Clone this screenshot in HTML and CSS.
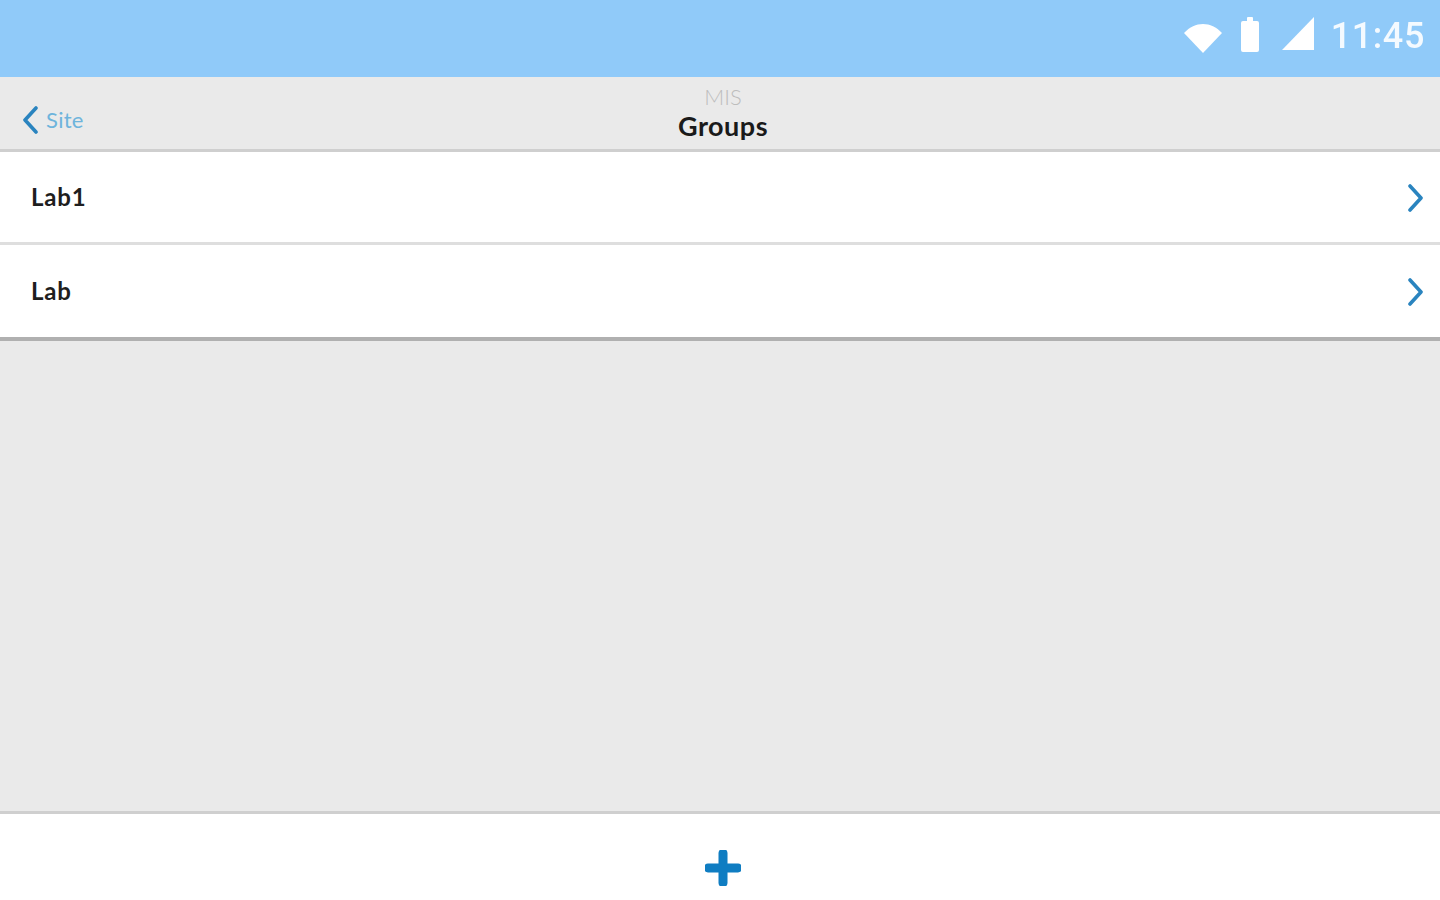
FILE: index.html
```html
<!DOCTYPE html>
<html lang="en">
<head>
<meta charset="utf-8">
<title>Groups</title>
<link rel="stylesheet" href="styles.css">
</head>
<body>
<div class="app">
  <header class="status">
    <svg class="ic-wifi" width="38" height="30" viewBox="0 0 38 30"><path class="white" d="M0 10 C11 -2 27 -2 38 10 L19 30 Z"/></svg>
    <svg class="ic-batt" width="18" height="35" viewBox="0 0 18 35"><path class="white" d="M6 4 V1 Q6 0 7 0 H11 Q12 0 12 1 V4 H16 Q18 4 18 6 V33 Q18 35 16 35 H2 Q0 35 0 33 V6 Q0 4 2 4 Z"/></svg>
    <svg class="ic-signal" width="32" height="33" viewBox="0 0 32 33"><path class="white" d="M32 0 V33 H0 Z"/></svg>
    <span class="clock">11:45</span>
  </header>
  <nav class="navbar">
    <div class="back">
      <svg width="18" height="28" viewBox="0 0 18 28"><path class="stroke" d="M15 2 L4 14 L15 26"/></svg>
      <span class="back-label">Site</span>
    </div>
    <div class="titles">
      <div class="subtitle">MIS</div>
      <div class="title">Groups</div>
    </div>
  </nav>
  <ul class="list">
    <li class="row">
      <span class="row-label">Lab1</span>
      <svg class="chev" width="18" height="28" viewBox="0 0 18 28"><path class="stroke" d="M3 2 L14 14 L3 26"/></svg>
    </li>
    <li class="row row-last">
      <span class="row-label">Lab</span>
      <svg class="chev" width="18" height="28" viewBox="0 0 18 28"><path class="stroke" d="M3 2 L14 14 L3 26"/></svg>
    </li>
  </ul>
  <main class="empty"></main>
  <footer class="toolbar">
    <svg width="36" height="36" viewBox="0 0 36 36"><path class="plus" d="M18 3 V33 M3 18 H33"/></svg>
  </footer>
</div>
</body>
</html>
```

FILE: styles.css
```css
* { box-sizing: border-box; }
html, body { margin: 0; padding: 0; height: 100%; }
body { font-family: Lato, "Open Sans", sans-serif; background: #eaeaea; }
.app { display: flex; flex-direction: column; width: 1440px; height: 900px; overflow: hidden; filter: blur(0.6px); }

.status {
  height: 77px; flex: none; background: #90caf9;
  display: flex; align-items: center; justify-content: flex-end;
  padding: 0 15px 5px 0;
}
.white { fill: #fff; }
.ic-wifi { margin-right: 19px; margin-top: 4px; }
.ic-batt { margin-right: 23px; margin-bottom: 3px; }
.ic-signal { margin-right: 17px; margin-bottom: 5px; }
.clock { font-family: Roboto, sans-serif; font-size: 36px; font-weight: 500; color: #fff; line-height: 1; letter-spacing: 0.6px; opacity: 0.9; }

.navbar {
  position: relative; height: 75px; flex: none; background: #eaeaea;
  border-bottom: 3px solid #cfcfcf;
}
.stroke { fill: none; stroke: #2a84bf; stroke-width: 3.6; stroke-linecap: round; stroke-linejoin: round; }
.back { display: flex; align-items: center; gap: 7px; padding: 29px 0 0 21px; }
.back-label { font-size: 22px; color: #6eb4dc; line-height: 28px; letter-spacing: 0.3px; }
.titles { position: absolute; left: 0; right: 0; top: 6px; text-align: center; padding-left: 6px; }
.subtitle { font-size: 22px; color: #bdbdbd; line-height: 28px; font-weight: 300; }
.title { font-size: 27px; font-weight: 700; color: #1a1a1a; line-height: 30px; letter-spacing: 0.5px; }

.list { list-style: none; margin: 0; padding: 0; flex: none; background: #fff; }
.row {
  height: 93px; display: flex; align-items: center; justify-content: space-between;
  padding: 0 15px 0 31px; border-bottom: 3px solid #dedede;
}
.row-last { height: 96px; border-bottom: 4px solid #b0b0b0; }
.row-label { font-size: 24px; font-weight: 700; color: #1e1e1e; letter-spacing: 0.8px; margin-bottom: 2px; }
.chev { margin-top: 1px; }

.empty { flex: 1; background: #eaeaea; }

.toolbar {
  height: 89px; flex: none; background: #fff; border-top: 3px solid #cfcfcf;
  display: flex; align-items: center; justify-content: center; padding: 21px 0 0 6px;
}
.plus { fill: none; stroke: #0f7dc2; stroke-width: 9; stroke-linecap: round; }
```
